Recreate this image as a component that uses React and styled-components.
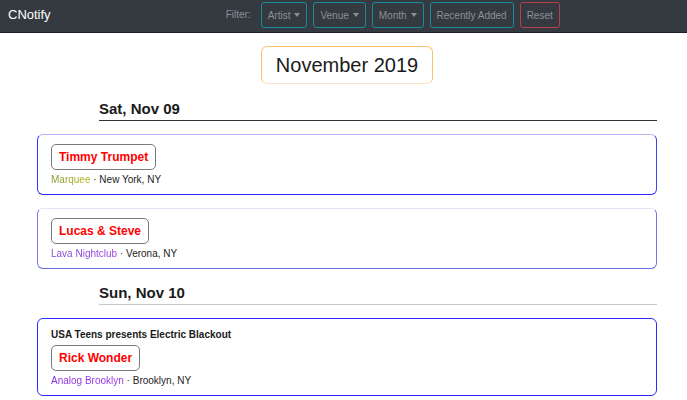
import React from 'react';
import styled, { createGlobalStyle, css } from 'styled-components';

const Global = createGlobalStyle`
  html, body {
    margin: 0;
    padding: 0;
    background: #fff;
    font-family: "Liberation Sans", Arial, sans-serif;
    color: #212529;
  }
  * { box-sizing: border-box; }
`;

const St = {
  Nav: styled.nav`
    height: 33px;
    background: #343a40;
    border-bottom: 1px solid #1b1f2c;
    display: flex;
    align-items: flex-start;
    padding: 0 8px;
  `,
  Brand: styled.div`
    color: #fff;
    font-size: 13px;
    line-height: 30px;
  `,
  Filters: styled.div`
    display: flex;
    align-items: flex-start;
    gap: 6px;
    margin-left: 175px;
    padding-top: 2px;
  `,
  FilterLabel: styled.span`
    color: #8b9096;
    font-size: 10px;
    line-height: 26px;
    margin-right: 4px;
  `,
  FilterButton: styled.button`
    height: 26px;
    padding: 0 6px;
    background: transparent;
    border: 1px solid ${(p) => (p.$danger ? '#b8404a' : '#1a8d9c')};
    border-radius: 3px;
    color: #8b9096;
    font-family: inherit;
    font-size: 10px;
    display: flex;
    align-items: center;
    gap: 4px;
  `,
  Caret: styled.span`
    width: 0;
    height: 0;
    border-left: 3.5px solid transparent;
    border-right: 3.5px solid transparent;
    border-top: 4px solid #8b9096;
  `,
  Page: styled.main`
    padding: 0 30px 0 37px;
  `,
  MonthRow: styled.div`
    display: flex;
    justify-content: center;
    padding-top: 13px;
  `,
  Month: styled.div`
    border: 1px solid #ffc170;
    border-bottom-color: #ffe2c4;
    border-radius: 6px;
    padding: 0 14px;
    height: 38px;
    display: flex;
    align-items: center;
    font-size: 20px;
    color: #1a1a1a;
  `,
  DayHeader: styled.h2`
    margin: ${(p) => (p.$first ? '16px' : '15px')} 0 13px 62px;
    padding-bottom: 2px;
    font-size: 15px;
    line-height: 18px;
    font-weight: bold;
    color: #1a1a1a;
    border-bottom: 1px solid ${(p) => (p.$first ? '#333' : '#c8c8c8')};
  `,
  Card: styled.div`
    border: 1px solid #2a2aff;
    border-radius: 6px;
    padding: 9px 13px 7px;
    margin-bottom: 13px;
    ${(p) =>
      p.$tone === 'fade' &&
      css`
        border-color: #b8b8f6 #4040f8 #2828ff #3535ff;
      `}
    ${(p) =>
      p.$tone === 'soft' &&
      css`
        border-color: #e2e2fb #7474ea #6868e4 #7a7aea;
      `}
  `,
  Title: styled.div`
    font-size: 10px;
    font-weight: bold;
    line-height: 13px;
    color: #1a1a1a;
    margin-bottom: 4px;
  `,
  Artist: styled.button`
    display: block;
    height: 26px;
    padding: 0 7px;
    background: #fff;
    border: 1px solid #7a7a7a;
    border-radius: 5px;
    color: #ff0000;
    font-family: inherit;
    font-size: 12px;
    font-weight: bold;
    margin-bottom: 2px;
  `,
  Where: styled.div`
    font-size: 10px;
    line-height: 15px;
    color: #222;
  `,
  Venue: styled.span`
    background: ${(p) => p.$grad};
    -webkit-background-clip: text;
    background-clip: text;
    color: transparent;
  `
};

const gradients = {
  olive: 'linear-gradient(90deg, #7f9a2a, #b8b21c)',
  lava: 'linear-gradient(90deg, #7a48d0, #a23ee0)',
  purple: 'linear-gradient(90deg, #8a2ee0, #9636e0)'
};

const days = [
  {
    label: 'Sat, Nov 09',
    events: [
      { artist: 'Timmy Trumpet', venue: 'Marquee', grad: 'olive', city: 'New York, NY', tone: 'fade' },
      { artist: 'Lucas & Steve', venue: 'Lava Nightclub', grad: 'lava', city: 'Verona, NY', tone: 'soft' }
    ]
  },
  {
    label: 'Sun, Nov 10',
    events: [
      {
        title: 'USA Teens presents Electric Blackout',
        artist: 'Rick Wonder',
        venue: 'Analog Brooklyn',
        grad: 'purple',
        city: 'Brooklyn, NY',
        tone: 'solid'
      }
    ]
  }
];

const App = () => (
  <>
    <Global />
    <St.Nav>
      <St.Brand>CNotify</St.Brand>
      <St.Filters>
        <St.FilterLabel>Filter:</St.FilterLabel>
        <St.FilterButton>Artist <St.Caret /></St.FilterButton>
        <St.FilterButton>Venue <St.Caret /></St.FilterButton>
        <St.FilterButton>Month <St.Caret /></St.FilterButton>
        <St.FilterButton>Recently Added</St.FilterButton>
        <St.FilterButton $danger>Reset</St.FilterButton>
      </St.Filters>
    </St.Nav>
    <St.Page>
      <St.MonthRow>
        <St.Month>November 2019</St.Month>
      </St.MonthRow>
      {days.map((day, i) => (
        <section key={day.label}>
          <St.DayHeader $first={i === 0}>{day.label}</St.DayHeader>
          {day.events.map((ev) => (
            <St.Card key={ev.artist} $tone={ev.tone}>
              {ev.title && <St.Title>{ev.title}</St.Title>}
              <St.Artist>{ev.artist}</St.Artist>
              <St.Where>
                <St.Venue $grad={gradients[ev.grad]}>{ev.venue}</St.Venue> · {ev.city}
              </St.Where>
            </St.Card>
          ))}
        </section>
      ))}
    </St.Page>
  </>
);

export default App;
